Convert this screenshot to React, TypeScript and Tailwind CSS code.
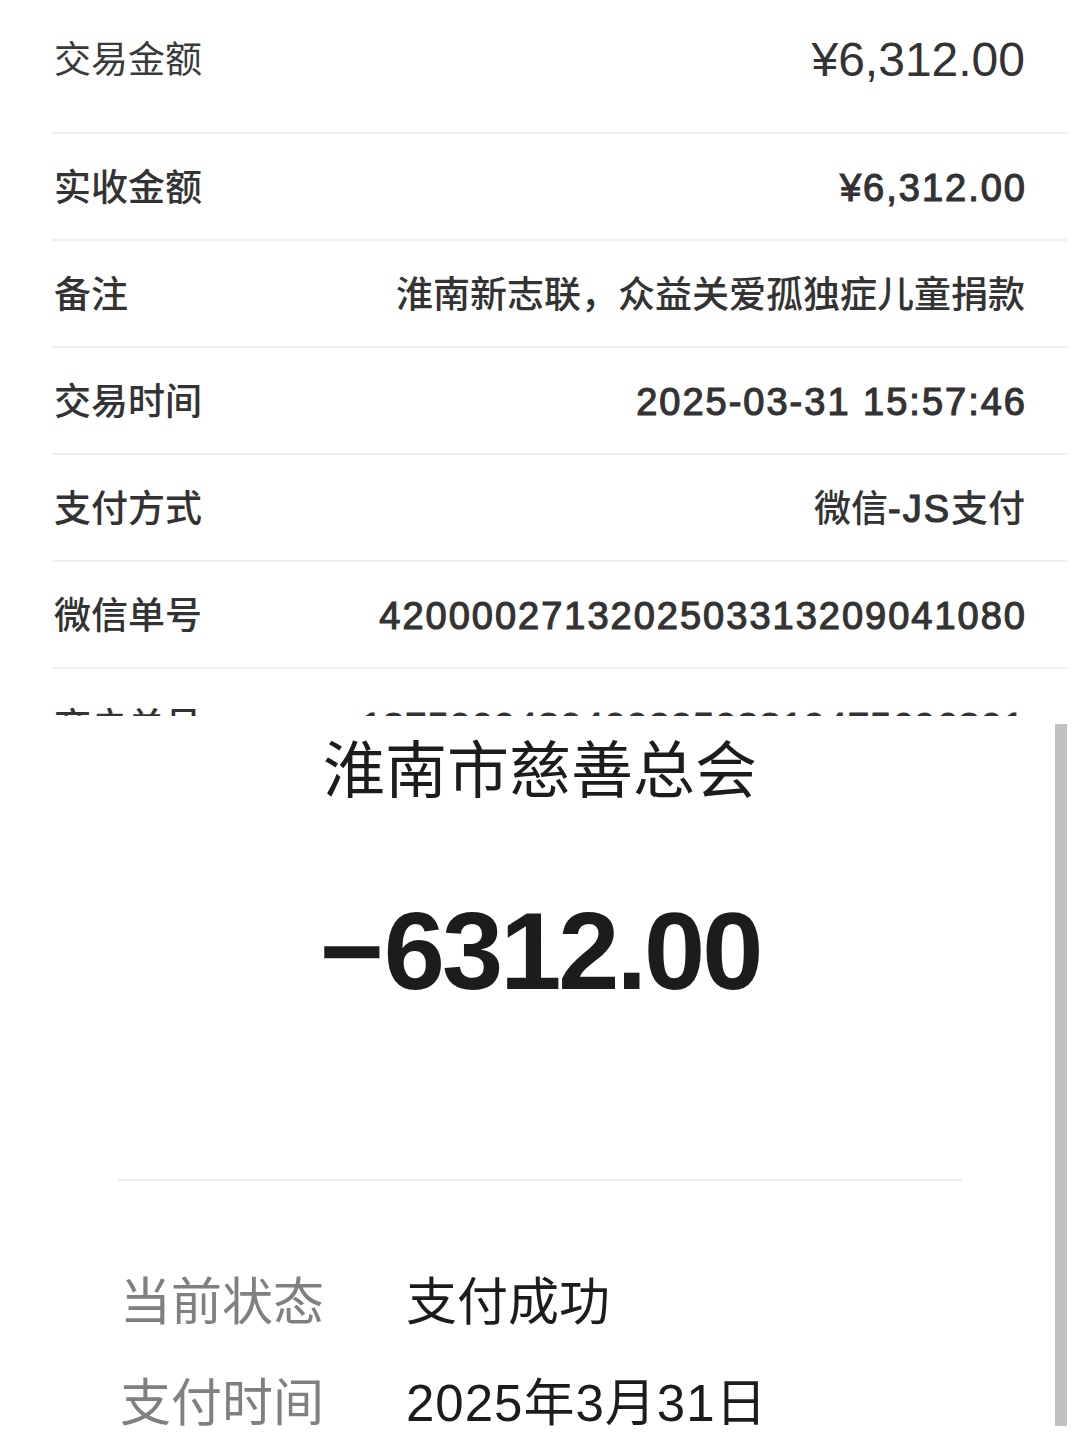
import type { ReactNode } from 'react'

const font = "font-['Liberation_Sans','Noto_Sans_CJK_SC',sans-serif]"
const numStyle = 'tracking-[2px] [-webkit-text-stroke:1.2px_#333]'

const rows: { label: string; value: ReactNode; num: boolean }[] = [
  { label: '实收金额', value: '¥6,312.00', num: true },
  { label: '备注', value: '淮南新志联，众益关爱孤独症儿童捐款', num: false },
  { label: '交易时间', value: '2025-03-31 15:57:46', num: true },
  {
    label: '支付方式',
    value: (
      <>
        微信<span className={`text-[38px] ${numStyle}`}>-JS</span>支付
      </>
    ),
    num: false,
  },
  { label: '微信单号', value: '4200002713202503313209041080', num: true },
]

const Row = ({ label, value, num }: { label: string; value: ReactNode; num: boolean }) => (
  <div
    className={`ml-[52px] mr-[13px] flex h-[107px] items-center justify-between border-b-2 border-[#efefef] pl-[2px] pt-[3px] text-[#333] ${
      num ? 'pr-[40px]' : 'pr-[42px]'
    }`}
  >
    <span className="text-[37px] leading-none font-medium">{label}</span>
    <span className={num ? `text-[38px] leading-none font-medium ${numStyle}` : 'text-[37px] leading-none font-medium'}>
      {value}
    </span>
  </div>
)

export default function App() {
  return (
    <div className={`flex h-[1440px] w-[1080px] flex-col overflow-hidden bg-white ${font}`}>
      {/* order details, top screenshot */}
      <div>
        <div className="ml-[52px] mr-[13px] flex h-[134px] items-center justify-between border-b-2 border-[#efefef] pr-[42px] pb-[12px] pl-[2px] text-[#333]">
          <span className="text-[37px] leading-none text-[#3a3a3a]">交易金额</span>
          <span className="text-[48px] leading-none">¥6,312.00</span>
        </div>
        {rows.map((r) => (
          <Row key={r.label} {...r} />
        ))}
        <div className="h-[47px] overflow-hidden">
          <div className="ml-[52px] mr-[13px] flex h-[109px] items-center justify-between pr-[42px] pl-[2px] pt-[7px] text-[#333]">
            <span className="text-[37px] leading-none font-medium">商户单号</span>
            <span className="text-[38px] leading-none font-medium tracking-[1px] [-webkit-text-stroke:1.2px_#333]">
              137500043040022503319475696301
            </span>
          </div>
        </div>
      </div>

      {/* bill detail, bottom screenshot */}
      <div className="relative flex-1">
        <div className="absolute top-[8px] right-[13px] h-[702px] w-[12px] bg-[#c1c1c1]" />
        <div className="pt-[25px] text-center text-[62px] leading-[62px] text-[#1c1c1c]">淮南市慈善总会</div>
        <div className="mt-[93px] flex justify-center text-[110px] leading-none font-bold tracking-[-3px] text-[#1c1c1c]">
          <span className="mr-[3px]">−</span>
          <span>6312.00</span>
        </div>
        <div className="mt-[173px] ml-[118px] h-[2px] w-[844px] bg-[#ededed]" />
        <div className="mt-[96px] ml-[120px] flex flex-col gap-[50px] text-[51px] leading-[51px]">
          <div className="flex">
            <span className="w-[286px] text-[#808080]">当前状态</span>
            <span className="text-[#1c1c1c]">支付成功</span>
          </div>
          <div className="flex">
            <span className="w-[286px] text-[#808080]">支付时间</span>
            <span className="tracking-[1px] text-[#1c1c1c]">2025年3月31日</span>
          </div>
        </div>
      </div>
    </div>
  )
}
